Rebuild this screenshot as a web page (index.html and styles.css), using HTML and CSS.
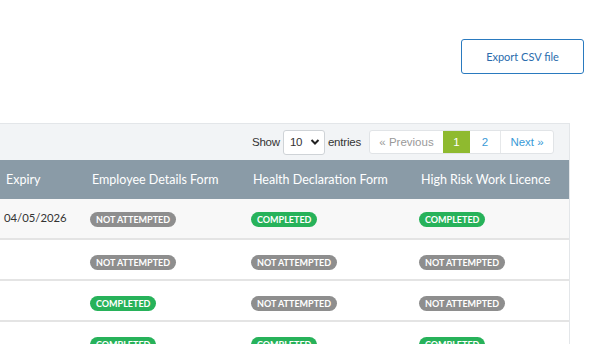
FILE: index.html
```html
<!DOCTYPE html>
<html>
<head>
<meta charset="utf-8">
<link rel="stylesheet" href="styles.css">
</head>
<body>
<div class="page">
  <div class="actions">
    <button class="export-btn">Export CSV file</button>
  </div>
  <div class="panel">
    <div class="toolbar">
      <label class="length">Show
        <span class="select">10
          <svg width="10" height="8" viewBox="0 0 10 8"><path d="M1.5 2 L5 5.5 L8.5 2" fill="none" stroke="#222" stroke-width="2"/></svg>
        </span>
        entries</label>
      <div class="pager">
        <span class="pg prev">« Previous</span>
        <span class="pg active">1</span>
        <span class="pg">2</span>
        <span class="pg next">Next »</span>
      </div>
    </div>
    <div class="table">
      <div class="row head">
        <div class="cell">Expiry</div>
        <div class="cell">Employee Details Form</div>
        <div class="cell">Health Declaration Form</div>
        <div class="cell">High Risk Work Licence</div>
      </div>
      <div class="row alt">
        <div class="cell date">04/05/2026</div>
        <div class="cell"><span class="badge grey">NOT ATTEMPTED</span></div>
        <div class="cell"><span class="badge green">COMPLETED</span></div>
        <div class="cell"><span class="badge green">COMPLETED</span></div>
      </div>
      <div class="row">
        <div class="cell"></div>
        <div class="cell"><span class="badge grey">NOT ATTEMPTED</span></div>
        <div class="cell"><span class="badge grey">NOT ATTEMPTED</span></div>
        <div class="cell"><span class="badge grey">NOT ATTEMPTED</span></div>
      </div>
      <div class="row">
        <div class="cell"></div>
        <div class="cell"><span class="badge green">COMPLETED</span></div>
        <div class="cell"><span class="badge grey">NOT ATTEMPTED</span></div>
        <div class="cell"><span class="badge grey">NOT ATTEMPTED</span></div>
      </div>
      <div class="row">
        <div class="cell"></div>
        <div class="cell"><span class="badge green">COMPLETED</span></div>
        <div class="cell"><span class="badge green">COMPLETED</span></div>
        <div class="cell"><span class="badge green">COMPLETED</span></div>
      </div>
    </div>
  </div>
</div>
</body>
</html>
```

FILE: styles.css
```css
* { box-sizing: border-box; }
html, body { margin: 0; padding: 0; background: #fff; }
body { font-family: Lato, "Open Sans", sans-serif; color: #333; overflow: hidden; }
.page { width: 600px; height: 344px; }

.actions { display: flex; justify-content: flex-end; padding: 39px 16px 0 0; height: 123px; }
.export-btn {
  width: 123px; height: 35px;
  border: 1px solid #2a7abf; border-radius: 3px; background: #fff;
  color: #2a6cad; font-family: Lato, sans-serif; font-size: 11px;
}

.panel {
  width: 570px;
  background: #f2f4f6;
  border-top: 1px solid #e3e6e9;
  border-right: 1px solid #e3e6e9;
}
.toolbar {
  height: 36px; display: flex; align-items: center; justify-content: flex-end;
  padding-right: 15px; gap: 8px;
  font-family: "Liberation Sans", Arial, sans-serif; font-size: 11.5px; color: #333;
}
.length { display: flex; align-items: center; gap: 3px; letter-spacing: -0.2px; }
.select {
  width: 42px; height: 25px; background: #fff; border: 1px solid #cfd3d7; border-radius: 3px;
  display: flex; align-items: center; justify-content: space-between; padding: 0 4px 0 6px;
}
.pager { display: flex; height: 24px; border: 1px solid #e1e4e7; border-radius: 3px; background: #fff; }
.pg { display: flex; align-items: center; justify-content: center; color: #3a9ad7; border-left: 1px solid #e6e8ea; }
.pg.prev { width: 73px; color: #999; border-left: none; }
.pg.active { width: 27px; background: #8fba2f; color: #fff; border-left: none; }
.pg:nth-child(3) { width: 30px; border-left: none; }
.pg.next { width: 53px; }

.table { background: #fff; }
.row { display: grid; grid-template-columns: 86px 161px 168px 155px; align-items: center; height: 41px; border-bottom: 2px solid #e4e4e4; }
.row.head { height: 39px; background: #8a9ba7; color: #fff; font-size: 12.5px; border-bottom: none; }
.row.head .cell { padding-left: 6px; }
.row.alt { background: #f8f8f8; height: 41px; padding-bottom: 3px; }
.cell { padding-left: 4px; white-space: nowrap; }
.date { font-size: 11.3px; color: #333; }
.badge {
  display: inline-block; height: 15px; line-height: 15px; padding: 0 6px; border-radius: 8px;
  color: #fff; font-size: 9px; font-weight: bold; letter-spacing: 0;
}
.badge.grey { background: #8e8e8e; }
.badge.green { background: #27b25a; }
```
